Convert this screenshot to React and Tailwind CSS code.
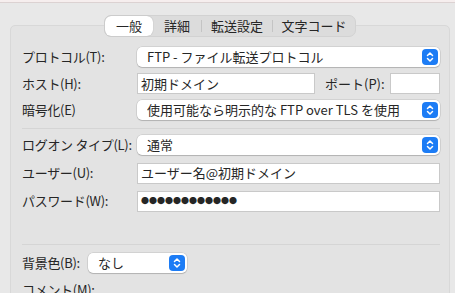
import React from 'react'

const font = { fontFamily: '"Noto Sans CJK JP", "Noto Sans", sans-serif' }

function Stepper() {
    return (
        <span className="w-[16px] h-[16px] rounded-[4px] bg-[#1c7cf5] flex items-center justify-center shrink-0">
            <svg width="8" height="12" viewBox="0 0 8 12" fill="none" stroke="white" strokeWidth="1.5" strokeLinecap="round" strokeLinejoin="round">
                <path d="M1.5 4.5 L4 2 L6.5 4.5" />
                <path d="M1.5 7.5 L4 10 L6.5 7.5" />
            </svg>
        </span>
    )
}

function Select({ value, className = '' }) {
    return (
        <div className={`h-[20px] bg-white rounded-[5px] shadow-[0_0_0_0.5px_rgba(0,0,0,0.15),0_1px_1px_rgba(0,0,0,0.15)] flex items-center pl-[10px] pr-[2px] ${className}`}>
            <span className="flex-1 text-[13px] text-[#262626] leading-[18px] whitespace-nowrap overflow-hidden">{value}</span>
            <Stepper />
        </div>
    )
}

function Input({ value, className = '' }) {
    return (
        <div className={`h-[21px] bg-white border border-[#c9c9c9] flex items-center pl-[3px] ${className}`}>
            <span className="text-[13px] text-[#262626] leading-[18px] whitespace-nowrap">{value}</span>
        </div>
    )
}

function Row({ label, h, children }) {
    return (
        <div className={`flex items-center ${h}`}>
            <span className="w-[115px] shrink-0 text-[13px] text-[#262626] tracking-[-0.3px] whitespace-nowrap">{label}</span>
            {children}
        </div>
    )
}

export default function App() {
    return (
        <div className="w-[455px] h-[293px] bg-[#e8e8e8] overflow-hidden" style={font}>
            <div className="h-[3px] bg-[#f6eeee] border-b border-[#dcd2d2]" />
            <div className="relative mt-[22px] ml-[10px] w-[440px] h-[300px] bg-[#e3e3e3] border border-[#d8d8d8] rounded-[5px]">
                {/* tabs */}
                <div className="absolute left-[93px] top-[-11px] w-[252px] h-[22px] bg-[#dcdcdc] border border-[#d2d2d2] rounded-[7px] flex items-center text-[13px] text-[#262626]">
                    <div className="w-[48px] h-[20px] bg-white rounded-[6px] shadow-[0_0_1px_rgba(0,0,0,0.3)] flex items-center justify-center">一般</div>
                    <div className="w-[48px] text-center">詳細</div>
                    <div className="w-px h-[12px] bg-[#c4c4c4]" />
                    <div className="w-[70px] text-center">転送設定</div>
                    <div className="w-px h-[12px] bg-[#c4c4c4]" />
                    <div className="flex-1 text-center">文字コード</div>
                </div>

                <div className="pt-[18px] pl-[11px] pr-[9px]">
                    <Row label="プロトコル(T):" h="h-[26px]">
                        <Select value="FTP - ファイル転送プロトコル" className="flex-1" />
                    </Row>
                    <Row label="ホスト(H):" h="h-[27px]">
                        <Input value="初期ドメイン" className="w-[178px]" />
                        <span className="ml-[10px] w-[65px] text-[13px] text-[#262626]">ポート(P):</span>
                        <Input value="" className="flex-1" />
                    </Row>
                    <Row label="暗号化(E)" h="h-[26px]">
                        <Select value="使用可能なら明示的な FTP over TLS を使用" className="flex-1" />
                    </Row>
                    <div className="mt-[5px] h-px bg-[#d5d5d5]" />
                    <div className="pt-[2px]">
                        <Row label="ログオン タイプ(L):" h="h-[28px]">
                            <Select value="通常" className="flex-1" />
                        </Row>
                        <Row label="ユーザー(U):" h="h-[28px]">
                            <Input value="ユーザー名@初期ドメイン" className="flex-1" />
                        </Row>
                        <Row label="パスワード(W):" h="h-[28px]">
                            <div className="flex-1 h-[21px] bg-white border border-[#c9c9c9] flex items-center pl-[3px]">
                                <span className="text-[8px] text-[#262626] leading-[10px] whitespace-nowrap">●●●●●●●●●●●●</span>
                            </div>
                        </Row>
                    </div>
                    <div className="mt-[29px] h-px bg-[#d5d5d5]" />
                    <div className="flex items-center h-[32px] pt-[3px]">
                        <span className="w-[66px] text-[13px] text-[#262626] tracking-[-0.3px]">背景色(B):</span>
                        <Select value="なし" className="w-[99px]" />
                    </div>
                    <div className="flex items-center h-[26px]">
                        <span className="text-[13px] text-[#262626] tracking-[-0.3px]">コメント(M):</span>
                    </div>
                </div>
            </div>
        </div>
    )
}
